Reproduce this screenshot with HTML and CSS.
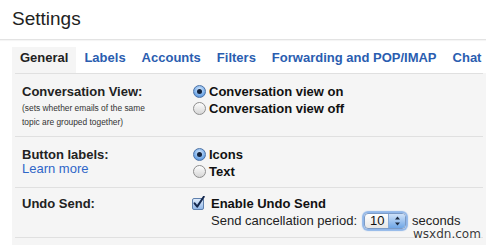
FILE: index.html
```html
<!DOCTYPE html>
<html lang="en">
<head>
    <meta charset="UTF-8">
    <meta name="viewport" content="width=device-width, initial-scale=1.0">
    <title>Settings</title>
    <link rel="stylesheet" href="styles.css">
</head>
<body>
    <h1 class="title">Settings</h1>

    <div class="tabs">
        <span class="tab active">General</span>
        <a class="tab" href="#">Labels</a>
        <a class="tab" href="#">Accounts</a>
        <a class="tab" href="#">Filters</a>
        <a class="tab" href="#">Forwarding and POP/IMAP</a>
        <a class="tab" href="#">Chat</a>
    </div>

    <div class="panel">
        <div class="row">
            <div class="label">
                <h4>Conversation View:</h4>
                <p class="note">(sets whether emails of the same<br>topic are grouped together)</p>
            </div>
            <div class="options">
                <label class="opt"><span class="radio on"></span>Conversation view on</label>
                <label class="opt"><span class="radio"></span>Conversation view off</label>
            </div>
        </div>

        <div class="row">
            <div class="label">
                <h4>Button labels:</h4>
                <a class="learn" href="#">Learn more</a>
            </div>
            <div class="options">
                <label class="opt"><span class="radio on"></span>Icons</label>
                <label class="opt"><span class="radio"></span>Text</label>
            </div>
        </div>

        <div class="row last">
            <div class="label">
                <h4>Undo Send:</h4>
            </div>
            <div class="options check-row">
                <span class="check">
                    <svg width="15" height="14" viewBox="0 0 15 14">
                        <defs>
                            <linearGradient id="cb" x1="0" y1="0" x2="0" y2="1">
                                <stop offset="0" stop-color="#e3eefc"/>
                                <stop offset="1" stop-color="#8db5e8"/>
                            </linearGradient>
                        </defs>
                        <rect x="0.5" y="2.5" width="11" height="11" rx="1.5" fill="url(#cb)" stroke="#5f80ad"/>
                        <path d="M2.6 7.4 L5.2 10.6 L11.8 0.8" fill="none" stroke="#14284e" stroke-width="2" stroke-linecap="round" stroke-linejoin="round"/>
                    </svg>
                </span>
                <div>
                    <div class="opt">Enable Undo Send</div>
                    <div class="period">
                        Send cancellation period:
                        <span class="select">
                            <span class="select-value">10</span>
                            <span class="select-arrows">
                                <svg width="7" height="10" viewBox="0 0 7 10">
                                    <path d="M3.5 0.5 L6 3.5 L1 3.5 Z M3.5 9.5 L6 6.5 L1 6.5 Z" fill="#1c2a40"/>
                                </svg>
                            </span>
                        </span>
                        seconds
                    </div>
                </div>
            </div>
        </div>
    </div>

    <div class="watermark">wsxdn.com</div>
</body>
</html>
```

FILE: styles.css
```css
body {
    margin: 0;
    font-family: "Liberation Sans", Arial, sans-serif;
    color: #222;
    background: #fff;
    position: relative;
    height: 245px;
    overflow: hidden;
}
.title {
    margin: 0;
    padding: 8px 0 9px 12px;
    font-size: 19px;
    line-height: 22px;
    font-weight: normal;
    color: #222;
    border-bottom: 1px solid #e3e3e3;
    box-shadow: 0 1px 1px rgba(0,0,0,0.04);
}
.tabs {
    display: flex;
    margin-top: 7px;
    padding-left: 12px;
}
.tab {
    padding: 3px 8px 8px;
    font-size: 13px;
    line-height: 15px;
    font-weight: bold;
    color: #2a5db0;
    text-decoration: none;
    white-space: nowrap;
}
.tab.active {
    color: #222;
    background: #f5f5f5;
}
.panel {
    margin-left: 12px;
    background: #f5f5f5;
    padding-bottom: 7px;
}
.row {
    display: grid;
    grid-template-columns: 171px 1fr;
    margin: 0 3px;
    padding: 9px 0 7px 7px;
    border-top: 1px solid #e0e0e0;
}
.row.last {
    padding: 7px 0 8px 7px;
    border-bottom: 1px solid #e0e0e0;
}
.label h4 {
    margin: 0;
    font-size: 13px;
    line-height: 15px;
    padding-top: 1px;
}
.note {
    margin: 2px 0 0;
    font-size: 8.4px;
    line-height: 14px;
    color: #333;
}
.learn {
    display: block;
    margin-top: 0;
    font-size: 13px;
    line-height: 14px;
    color: #2f66c8;
    text-decoration: none;
}
.options {
    display: flex;
    flex-direction: column;
}
.opt {
    display: flex;
    align-items: center;
    font-size: 13px;
    line-height: 17px;
    font-weight: bold;
    color: #111;
}
.radio {
    flex: none;
    display: grid;
    place-items: center;
    box-sizing: border-box;
    width: 13px;
    height: 13px;
    margin-right: 3px;
    border-radius: 50%;
    border: 1px solid #8e8e8e;
    background: linear-gradient(#fdfdfd, #d6d6d6);
}
.radio.on {
    border-color: #4d73a6;
    background: radial-gradient(circle at 50% 35%, #dcebfc, #78ade9 60%, #3f7ccb);
}
.radio.on::after {
    content: '';
    width: 5px;
    height: 5px;
    border-radius: 50%;
    background: #13233d;
}
.check-row {
    flex-direction: row;
}
.check {
    flex: none;
    width: 19px;
    height: 17px;
    margin-left: -1px;
    padding-top: 1px;
    box-sizing: border-box;
}
.check svg {
    display: block;
}
.period {
    display: flex;
    align-items: center;
    height: 17px;
    font-size: 13px;
    white-space: nowrap;
}
.select {
    display: flex;
    box-sizing: border-box;
    width: 42px;
    height: 16px;
    margin: 0 6px 0 7px;
    border: 1px solid #7c9bc6;
    border-radius: 4px;
    overflow: hidden;
    background: linear-gradient(#fff, #e6e6e6);
    box-shadow: 0 0 1px 2px rgba(110,160,228,0.75);
}
.select-value {
    flex: 1;
    padding-left: 5px;
    font-size: 13px;
    line-height: 14px;
    color: #111;
}
.select-arrows {
    display: flex;
    align-items: center;
    justify-content: center;
    width: 16px;
    background: linear-gradient(#cfe2f9, #6fa6e6);
    border-left: 1px solid #8aaad6;
}
.watermark {
    position: absolute;
    left: 413px;
    top: 229px;
    font-family: "DejaVu Sans", sans-serif;
    font-size: 12px;
    line-height: 11px;
    color: #3a3a3a;
    text-shadow: 0 0 2px #fff, 0 0 2px #fff;
}
```
